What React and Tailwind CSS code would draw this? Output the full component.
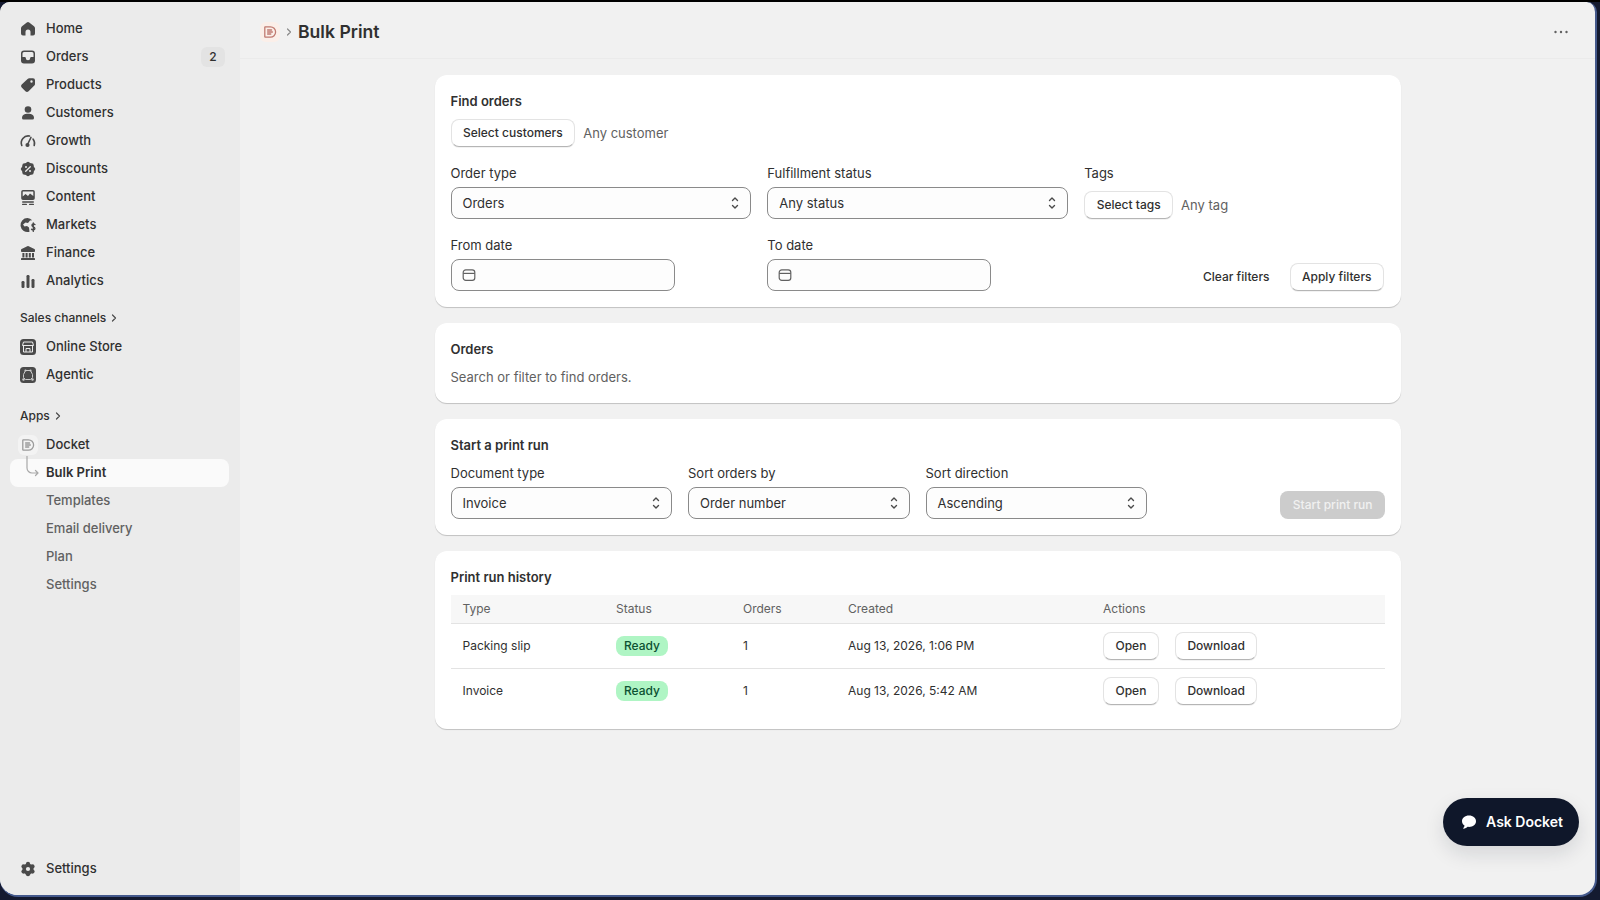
const HomeIcon = () => (
  <svg viewBox="0 0 20 20" className="w-5 h-5 fill-[#4a4a4a]">
    <path d="M8.8 3.5 4 7.2A2.5 2.5 0 0 0 3 9.2V14.5A2 2 0 0 0 5 16.5H7.5V13A2.5 2.5 0 0 1 12.5 13V16.5H15A2 2 0 0 0 17 14.5V9.2A2.5 2.5 0 0 0 16 7.2L11.2 3.5A2 2 0 0 0 8.8 3.5Z" />
  </svg>
);

const OrdersIcon = () => (
  <svg viewBox="0 0 20 20" className="w-5 h-5 fill-[#4a4a4a]">
    <path fillRule="evenodd" d="M6 3.5H14A3 3 0 0 1 17 6.5V13.5A3 3 0 0 1 14 16.5H6A3 3 0 0 1 3 13.5V6.5A3 3 0 0 1 6 3.5ZM4.5 10H6.8A1 1 0 0 1 7.8 11A2.2 2.2 0 0 0 12.2 11A1 1 0 0 1 13.2 10H15.5V6.5A1.5 1.5 0 0 0 14 5H6A1.5 1.5 0 0 0 4.5 6.5Z" />
  </svg>
);

const ProductsIcon = () => (
  <svg viewBox="0 0 20 20" className="w-5 h-5 fill-[#4a4a4a]">
    <path fillRule="evenodd" d="M11.3 3.2H15A2 2 0 0 1 17 5.2V8.9A2.5 2.5 0 0 1 16.3 10.6L10.6 16.3A2.3 2.3 0 0 1 7.4 16.3L3.7 12.6A2.3 2.3 0 0 1 3.7 9.4L9.6 3.9A2.5 2.5 0 0 1 11.3 3.2ZM13.5 5.3A1.2 1.2 0 1 0 13.5 7.7A1.2 1.2 0 1 0 13.5 5.3Z" />
  </svg>
);

const CustomersIcon = () => (
  <svg viewBox="0 0 20 20" className="w-5 h-5 fill-[#4a4a4a]">
    <circle cx="10" cy="6.5" r="3.3" />
    <path d="M4 15C4 12 6.5 10.8 10 10.8S16 12 16 15A1.5 1.5 0 0 1 14.5 16.5H5.5A1.5 1.5 0 0 1 4 15Z" />
  </svg>
);

const GrowthIcon = () => (
  <svg viewBox="0 0 20 20" className="w-5 h-5 fill-none stroke-[#4a4a4a] stroke-[1.6]" strokeLinecap="round">
    <path d="M3.8 14.5A7 7 0 0 1 11.5 5" />
    <path d="M15 8A7 7 0 0 1 16.2 14.5" />
    <path d="M9.5 13.5 13 6.3" strokeWidth="1.5" />
    <circle cx="9.5" cy="14" r="1.3" className="fill-[#4a4a4a]" />
  </svg>
);

const DiscountsIcon = () => (
  <svg viewBox="0 0 20 20" className="w-5 h-5 fill-[#4a4a4a]">
    <rect x="4.3" y="4.3" width="11.4" height="11.4" rx="2.2" />
    <rect x="4.3" y="4.3" width="11.4" height="11.4" rx="2.2" transform="rotate(45 10 10)" />
    <path d="M12.3 7.7 7.7 12.3" stroke="#ebebeb" strokeWidth="1.3" strokeLinecap="round" />
    <circle cx="8" cy="8" r="1" fill="#ebebeb" />
    <circle cx="12" cy="12" r="1" fill="#ebebeb" />
  </svg>
);

const ContentIcon = () => (
  <svg viewBox="0 0 20 20" className="w-5 h-5 fill-[#4a4a4a]">
    <path fillRule="evenodd" d="M5 3H15A1.8 1.8 0 0 1 16.8 4.8V11.2A1.8 1.8 0 0 1 15 13H5A1.8 1.8 0 0 1 3.2 11.2V4.8A1.8 1.8 0 0 1 5 3ZM4.7 9.5 7.5 7 10 9 12 6.5 15.3 9V4.8A.3.3 0 0 0 15 4.5H5A.3.3 0 0 0 4.7 4.8Z" />
    <rect x="4" y="14.3" width="12" height="1.5" rx=".75" />
    <rect x="4" y="16.8" width="5" height="1.2" rx=".6" />
    <rect x="11" y="16.8" width="5" height="1.2" rx=".6" />
  </svg>
);

const MarketsIcon = () => (
  <svg viewBox="0 0 20 20" className="w-5 h-5">
    <path className="fill-[#4a4a4a]" d="M9.5 3A7 7 0 1 0 11.5 16.7L11 12.5 9 11 6.5 11.5 5 9.5 7.5 7.5 10 8 12 5.5 14.2 5.2A7 7 0 0 0 9.5 3Z" />
    <path d="M17 9.6C16.4 8.8 14.2 8.6 13.9 10.2 13.6 12 17 11.8 16.9 13.7 16.8 15.2 14.4 15.2 13.5 14.2M15.3 7.8V16.4" fill="none" stroke="#4a4a4a" strokeWidth="1.3" strokeLinecap="round" />
  </svg>
);

const FinanceIcon = () => (
  <svg viewBox="0 0 20 20" className="w-5 h-5 fill-[#4a4a4a]">
    <path d="M9.3 3.2 3.6 6A1 1 0 0 0 3 7V8.2A.8.8 0 0 0 3.8 9H16.2A.8.8 0 0 0 17 8.2V7A1 1 0 0 0 16.4 6L10.7 3.2A1.5 1.5 0 0 0 9.3 3.2Z" />
    <rect x="4.4" y="10" width="2" height="4.5" />
    <rect x="7.6" y="10" width="2" height="4.5" />
    <rect x="10.8" y="10" width="2" height="4.5" />
    <rect x="14" y="10" width="2" height="4.5" />
    <rect x="3" y="15" width="14" height="2" rx=".6" />
  </svg>
);

const AnalyticsIcon = () => (
  <svg viewBox="0 0 20 20" className="w-5 h-5 fill-[#4a4a4a]">
    <rect x="3.5" y="10" width="3" height="7" rx="1.2" />
    <rect x="8.5" y="4" width="3" height="13" rx="1.2" />
    <rect x="13.5" y="8" width="3" height="9" rx="1.2" />
  </svg>
);

const StoreIcon = () => (
  <svg viewBox="0 0 20 20" className="w-5 h-5">
    <rect x="2" y="2" width="16" height="16" rx="3.5" fill="#4a4a4a" />
    <path d="M5.5 5H14.5L15.5 8.5H4.5ZM5.5 9V15H14.5V9M8 15V11.5H12V15" fill="none" stroke="#ebebeb" strokeWidth="1" strokeLinejoin="round" />
  </svg>
);

const AgenticIcon = () => (
  <svg viewBox="0 0 20 20" className="w-5 h-5">
    <rect x="2" y="2" width="16" height="16" rx="3.5" fill="#4a4a4a" />
    <path d="M7.5 5.5H12.5L14.5 9.5V12.5L12.5 14.5H7.5L5.5 12.5V9.5Z" fill="none" stroke="#c9c9c9" strokeWidth="1" strokeLinejoin="round" />
    <circle cx="5.5" cy="14.5" r="1.2" fill="#c9c9c9" />
    <circle cx="14.5" cy="14.5" r="1.2" fill="#c9c9c9" />
    <circle cx="7.5" cy="5.5" r="1.1" fill="#c9c9c9" />
    <circle cx="12.5" cy="5.5" r="1.1" fill="#c9c9c9" />
  </svg>
);

const SettingsIcon = () => (
  <svg viewBox="0 0 20 20" className="w-5 h-5 fill-[#4a4a4a]">
    <circle cx="10" cy="10" r="5.6" />
    <circle cx="10" cy="4.8" r="2.1" />
    <circle cx="10" cy="15.2" r="2.1" />
    <circle cx="5.5" cy="7.4" r="2.1" />
    <circle cx="14.5" cy="7.4" r="2.1" />
    <circle cx="5.5" cy="12.6" r="2.1" />
    <circle cx="14.5" cy="12.6" r="2.1" />
    <circle cx="10" cy="10" r="2.1" fill="#ebebeb" />
  </svg>
);

const DocketLogo = ({ color }) => (
  <svg viewBox="0 0 20 20" className="w-4 h-4 fill-none" stroke={color} strokeWidth="1.6" strokeLinecap="round" strokeLinejoin="round">
    <path d="M4 3.5H10.5A6.5 6.5 0 0 1 10.5 16.5H4A1 1 0 0 1 3.5 16V4A.6.6 0 0 1 4 3.5Z" />
    <path d="M7 7.5H12M7 10H13M7 12.5H11" />
  </svg>
);

const Chevron = ({ className }) => (
  <svg viewBox="0 0 8 10" className={className} fill="none" stroke="currentColor" strokeWidth="1.2" strokeLinecap="round" strokeLinejoin="round">
    <path d="M2.5 2 5.5 5 2.5 8" />
  </svg>
);

const SelectIcon = () => (
  <svg viewBox="0 0 12 16" className="w-3 h-4 fill-none stroke-[#4a4a4a] stroke-[1.4]" strokeLinecap="round" strokeLinejoin="round">
    <path d="M3.5 5.5 6 3 8.5 5.5" />
    <path d="M3.5 10.5 6 13 8.5 10.5" />
  </svg>
);

const CalendarIcon = () => (
  <svg viewBox="0 0 16 16" className="w-4 h-4 fill-none stroke-[#616161] stroke-[1.2]">
    <rect x="2.2" y="2.8" width="11.6" height="10.6" rx="2.6" />
    <path d="M2.2 6.4H13.8" />
  </svg>
);

const navMain = [
  ["Home", HomeIcon],
  ["Orders", OrdersIcon],
  ["Products", ProductsIcon],
  ["Customers", CustomersIcon],
  ["Growth", GrowthIcon],
  ["Discounts", DiscountsIcon],
  ["Content", ContentIcon],
  ["Markets", MarketsIcon],
  ["Finance", FinanceIcon],
  ["Analytics", AnalyticsIcon],
];

const NavItem = ({ label, Icon, badge }) => (
  <div className="h-7 flex items-center pl-[18px] pr-[15px]">
    <span className="w-5 h-5 flex items-center justify-center mr-2"><Icon /></span>
    <span className="flex-1 text-[#303030] font-[450]">{label}</span>
    {badge && <span className="w-6 h-5 bg-[#e3e3e3] rounded-md text-xs font-[450] text-[#303030] flex items-center justify-center">{badge}</span>}
  </div>
);

const SubItem = ({ label }) => (
  <div className="h-7 flex items-center pl-[46px] text-[#616161] font-[450]">{label}</div>
);

const SectionLabel = ({ label, className }) => (
  <div className={`h-7 pb-0.5 flex items-center gap-1 pl-5 text-xs text-[#303030] font-[450] ${className}`}>
    {label}
    <Chevron className="w-2 h-2.5 text-[#4a4a4a]" />
  </div>
);

const Sidebar = () => (
  <aside className="w-[240px] shrink-0 bg-[#ebebeb] flex flex-col pt-[13px] pb-3 text-[13px]">
    {navMain.map(([label, Icon]) => (
      <NavItem key={label} label={label} Icon={Icon} badge={label === "Orders" ? "2" : null} />
    ))}
    <SectionLabel label="Sales channels" className="mt-[10px]" />
    <NavItem label="Online Store" Icon={StoreIcon} />
    <NavItem label="Agentic" Icon={AgenticIcon} />
    <SectionLabel label="Apps" className="mt-[14px]" />
    <div className="h-7 flex items-center pl-[18px]">
      <span className="w-5 h-5 mr-2 rounded-md bg-[#f3f3f3] flex items-center justify-center"><DocketLogo color="#9b9b9b" /></span>
      <span className="text-[#303030] font-[450]">Docket</span>
    </div>
    <div className="relative h-7 ml-[10px] mr-[11px] bg-[#fafafa] rounded-lg flex items-center pl-9 text-[#303030] font-semibold">
      Bulk Print
      <svg viewBox="0 0 24 24" className="absolute left-[15px] -top-[3px] w-6 h-6 fill-none stroke-[#a8a8a8] stroke-[1.2]" strokeLinecap="round" strokeLinejoin="round">
        <path d="M2 0V12A5 5 0 0 0 7 17H13M10.5 14.5 13 17 10.5 19.5" />
      </svg>
    </div>
    <SubItem label="Templates" />
    <SubItem label="Email delivery" />
    <SubItem label="Plan" />
    <SubItem label="Settings" />
    <div className="mt-auto">
      <NavItem label="Settings" Icon={SettingsIcon} />
    </div>
  </aside>
);

const Card = ({ children }) => (
  <section className="bg-white rounded-xl p-4 shadow-[0_1px_0_0_rgba(26,26,26,0.07),0_1px_1px_0_rgba(0,0,0,0.14)]">
    {children}
  </section>
);

const CardTitle = ({ children, className = "" }) => (
  <h2 className={`h-5 leading-5 text-[13px] font-semibold text-[#303030] ${className}`}>{children}</h2>
);

const Label = ({ children }) => (
  <div className="h-5 leading-5 mb-1 text-[13px] text-[#303030]">{children}</div>
);

const Button = ({ children, className = "" }) => (
  <button className={`h-7 px-[11.5px] shrink-0 rounded-lg bg-white text-xs font-[550] text-[#303030] border border-[#e3e3e3] border-b-[#b5b5b5] shadow-[0_1px_0_0_rgba(0,0,0,0.05)] ${className}`}>
    {children}
  </button>
);

const SelectBox = ({ value }) => (
  <div className="h-8 pl-[11px] pr-[9px] flex items-center justify-between bg-[#fdfdfd] border border-[#8a8a8a] rounded-lg text-[13px] text-[#303030]">
    <span className="pt-px">{value}</span>
    <SelectIcon />
  </div>
);

const DateInput = () => (
  <div className="w-[224px] h-8 pl-[9px] flex items-center bg-[#fdfdfd] border border-[#8a8a8a] rounded-lg">
    <CalendarIcon />
  </div>
);

const Ready = () => (
  <span className="inline-flex items-center h-5 px-2 rounded-lg bg-[#aff5c4] text-xs font-[550] text-[#0c5132]">Ready</span>
);

const runs = [
  ["Packing slip", "Aug 13, 2026, 1:06 PM"],
  ["Invoice", "Aug 13, 2026, 5:42 AM"],
];

const App = () => {
  return (
    <div className="h-screen bg-[#141a30] border-t-2 border-black pr-[3px] pb-[3px] overflow-hidden font-['Inter',sans-serif]">
      <div className="relative h-full flex overflow-hidden rounded-t-[10px] rounded-b-[18px] bg-[#f1f1f1] border-r-2 border-b-2 border-[#44598c]">
        <Sidebar />
        <main className="flex-1 min-w-0">
          <header className="h-[57px] pt-[4px] border-b border-[#ebebeb] flex items-center pl-5 pr-[26px]">
            <span className="w-5 h-5 rounded-md bg-[#fbefe9] flex items-center justify-center"><DocketLogo color="#c07a70" /></span>
            <Chevron className="w-2 h-2.5 mx-[5px] text-[#8a8a8a]" />
            <h1 className="text-[17.6px] font-semibold text-[#303030]">Bulk Print</h1>
            <svg viewBox="0 0 16 16" className="ml-auto w-4 h-4 fill-[#616161]">
              <circle cx="2.5" cy="8" r="1.2" />
              <circle cx="8" cy="8" r="1.2" />
              <circle cx="13.5" cy="8" r="1.2" />
            </svg>
          </header>

          <div className="w-[966.5px] ml-[194.5px] pt-4 flex flex-col gap-4">
            <Card>
              <CardTitle>Find orders</CardTitle>
              <div className="mt-2 flex items-center gap-2">
                <Button>Select customers</Button>
                <span className="pt-px text-[13px] text-[#616161]">Any customer</span>
              </div>
              <div className="mt-4 grid grid-cols-3 gap-4">
                <div>
                  <Label>Order type</Label>
                  <SelectBox value="Orders" />
                </div>
                <div>
                  <Label>Fulfillment status</Label>
                  <SelectBox value="Any status" />
                </div>
                <div>
                  <Label>Tags</Label>
                  <div className="h-8 flex items-end gap-2">
                    <Button>Select tags</Button>
                    <span className="h-7 leading-7 text-[13px] text-[#616161]">Any tag</span>
                  </div>
                </div>
                <div>
                  <Label>From date</Label>
                  <DateInput />
                </div>
                <div>
                  <Label>To date</Label>
                  <DateInput />
                </div>
                <div className="flex items-end justify-end gap-5 pr-px">
                  <button className="h-7 text-xs font-[550] text-[#303030]">Clear filters</button>
                  <Button>Apply filters</Button>
                </div>
              </div>
            </Card>

            <Card>
              <CardTitle>Orders</CardTitle>
              <p className="mt-2 h-5 leading-5 text-[13px] text-[#616161]">Search or filter to find orders.</p>
            </Card>

            <Card>
              <CardTitle>Start a print run</CardTitle>
              <div className="mt-2 flex items-end gap-4">
                <div className="w-[221.5px]">
                  <Label>Document type</Label>
                  <SelectBox value="Invoice" />
                </div>
                <div className="w-[221.5px]">
                  <Label>Sort orders by</Label>
                  <SelectBox value="Order number" />
                </div>
                <div className="w-[221.5px]">
                  <Label>Sort direction</Label>
                  <SelectBox value="Ascending" />
                </div>
                <button className="ml-auto h-7 px-[12.5px] rounded-lg bg-[#cccccc] text-xs font-[550] text-[#f1f1f1]">Start print run</button>
              </div>
            </Card>

            <Card>
              <CardTitle>Print run history</CardTitle>
              <table className="mt-2 w-full table-fixed text-[13px] text-[#303030] text-left">
                <thead>
                  <tr className="h-[28px] bg-[#f7f7f7] border-b border-[#e3e3e3] text-xs text-[#616161]">
                    <th className="w-[153.5px] pl-3 font-normal">Type</th>
                    <th className="w-[127px] pl-3 font-normal">Status</th>
                    <th className="w-[105px] pl-3 font-normal">Orders</th>
                    <th className="w-[255px] pl-3 font-normal">Created</th>
                    <th className="pl-3 font-normal">Actions</th>
                  </tr>
                </thead>
                <tbody>
                  {runs.map(([type, created], i) => (
                    <tr key={type} className={`h-[45px] ${i === 0 ? "border-b border-[#e3e3e3]" : ""}`}>
                      <td className="pl-3 text-xs">{type}</td>
                      <td className="pl-3"><Ready /></td>
                      <td className="pl-3 text-xs">1</td>
                      <td className="pl-3 text-xs">{created}</td>
                      <td className="pl-3">
                        <div className="flex gap-4">
                          <Button>Open</Button>
                          <Button>Download</Button>
                        </div>
                      </td>
                    </tr>
                  ))}
                </tbody>
              </table>
            </Card>
          </div>
        </main>

        <button className="absolute right-[16px] bottom-[49px] h-12 pl-[18px] pr-4 rounded-full bg-[#0f172a] flex items-center gap-[9px] text-sm font-semibold text-white shadow-[0_8px_20px_rgba(15,23,42,0.12)]">
          <svg viewBox="0 0 16 16" className="w-4 h-4 fill-white">
            <path d="M8 1.5C3.9 1.5 1 4 1 7.2 1 9.1 2 10.6 3.5 11.6 3.4 12.6 2.9 13.6 2.2 14.2 2 14.4 2.2 14.7 2.5 14.7 4.2 14.6 5.6 13.9 6.6 12.8 7 12.9 7.5 12.9 8 12.9 12.1 12.9 15 10.4 15 7.2 15 4 12.1 1.5 8 1.5Z" />
          </svg>
          Ask Docket
        </button>
      </div>
    </div>
  );
};

export default App;
